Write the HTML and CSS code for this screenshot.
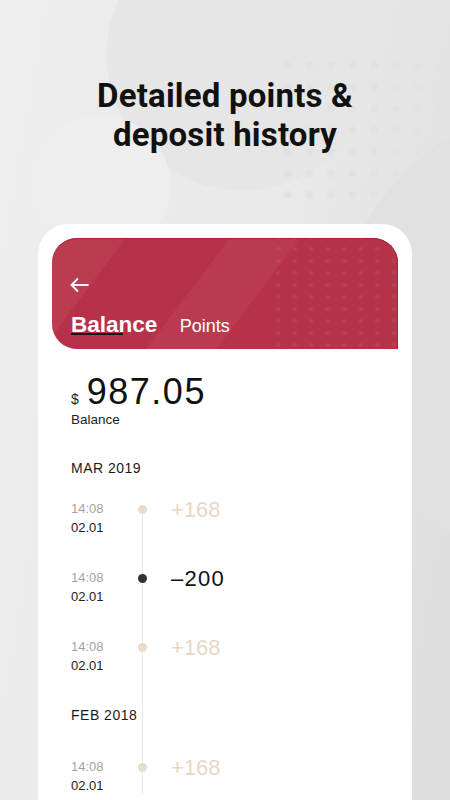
FILE: index.html
```html
<!DOCTYPE html>
<html lang="en">
<head>
<meta charset="utf-8">
<title>Balance history</title>
<link rel="stylesheet" href="styles.css">
</head>
<body>
  <h1 class="headline">Detailed points &amp;<br>deposit history</h1>

  <section class="card">
    <header class="appbar">
      <svg class="back" width="20" height="16" viewBox="0 0 20 16" aria-hidden="true">
        <path d="M19.5 8H2.5M9 1.5L2.5 8L9 14.5" fill="none" stroke="#fff" stroke-width="1.8"/>
      </svg>
      <nav class="tabs">
        <span class="tab tab-active">Balance</span>
        <span class="tab">Points</span>
      </nav>
    </header>

    <div class="summary">
      <div class="amount"><span class="currency">$</span><span class="value">987.05</span></div>
      <div class="amount-label">Balance</div>
    </div>

    <div class="history">
      <div class="group">
        <div class="month">MAR 2019</div>
        <ul class="rows">
          <li class="row">
            <div class="when"><span class="time">14:08</span><span class="date">02.01</span></div>
            <span class="dot"></span>
            <span class="points">+168</span>
          </li>
          <li class="row row-debit">
            <div class="when"><span class="time">14:08</span><span class="date">02.01</span></div>
            <span class="dot"></span>
            <span class="points">&ndash;200</span>
          </li>
          <li class="row">
            <div class="when"><span class="time">14:08</span><span class="date">02.01</span></div>
            <span class="dot"></span>
            <span class="points">+168</span>
          </li>
        </ul>
      </div>
      <div class="group group-later">
        <div class="month">FEB 2018</div>
        <ul class="rows">
          <li class="row">
            <div class="when"><span class="time">14:08</span><span class="date">02.01</span></div>
            <span class="dot"></span>
            <span class="points">+168</span>
          </li>
        </ul>
      </div>
    </div>
  </section>
</body>
</html>
```

FILE: styles.css
```css
html, body {
  margin: 0;
  padding: 0;
}

body {
  width: 450px;
  height: 800px;
  overflow: hidden;
  position: relative;
  font-family: "Liberation Sans", Arial, sans-serif;
  color: #1a1a1a;
  background:
    radial-gradient(circle at 101px 185px, #eeeeee 69px, rgba(238,238,238,0) 69.6px),
    radial-gradient(circle at 242px 55px, #e6e6e6 135px, rgba(230,230,230,0) 135.6px),
    radial-gradient(circle at 565px 335px, #e1e1e1 228px, rgba(225,225,225,0) 228.6px),
    linear-gradient(100deg, #eeeeee 0%, #e9e9e9 55%, #dddddd 100%);
}

/* decorative dot grid, top right */
body::before {
  content: "";
  position: absolute;
  left: 277px;
  top: 55px;
  width: 173px;
  height: 151px;
  background: radial-gradient(circle, #e2e2e2 3.6px, rgba(226,226,226,0) 4.3px) 0 0 / 21.6px 21.5px;
}

.headline {
  position: relative;
  z-index: 1;
  margin: 76px 0 0;
  font-family: Roboto, "Liberation Sans", sans-serif;
  font-weight: 700;
  font-size: 33px;
  line-height: 39px;
  text-align: center;
  color: #111;
  letter-spacing: 0.2px;
}

.card {
  margin: 70px 38px 0;
  height: 600px;
  padding: 14px 14px 0;
  background: #fff;
  border-radius: 30px 30px 0 0;
}

.appbar {
  position: relative;
  height: 111px;
  box-sizing: border-box;
  padding-top: 39px;
  border-radius: 25px 25px 0 25px;
  overflow: hidden;
  background: linear-gradient(127deg,
      #bb3b4f 0 59px,
      #b6324a 59px 142px,
      #ba3a4f 142px 198px,
      #b7334a 198px);
  box-shadow: inset 0 1px 0 #a8263b, inset -1px 0 0 #a8263b;
}

.appbar::before {
  content: "";
  position: absolute;
  left: 218px;
  top: 0;
  right: 0;
  bottom: 0;
  background: radial-gradient(circle, rgba(255,255,255,0.055) 2px, rgba(255,255,255,0) 2.6px) 0 5px / 16.5px 12px;
}

.back {
  position: relative;
  display: block;
  margin-left: 17px;
}

.tabs {
  position: relative;
  display: flex;
  align-items: baseline;
  gap: 22.5px;
  margin-top: 19px;
  padding-left: 19px;
  color: #fff;
}

.tab {
  position: relative;
  font-size: 18px;
  line-height: 26px;
}

.tab-active {
  font-size: 22.5px;
  font-weight: 700;
}

.tab-active::after {
  content: "";
  position: absolute;
  left: 0;
  top: 21px;
  width: 52px;
  height: 2px;
  background: #151515;
}

.summary {
  padding: 23px 0 0 19px;
}

.amount {
  display: flex;
  align-items: baseline;
  height: 40px;
}

.currency {
  font-size: 14px;
  line-height: 14px;
  margin-right: 8px;
  color: #222;
}

.value {
  font-size: 36px;
  line-height: 40px;
  letter-spacing: 1.5px;
  color: #111;
}

.amount-label {
  font-size: 13.5px;
  line-height: 16px;
  color: #222;
}

.history {
  margin-top: 31px;
  padding-left: 19px;
  background: linear-gradient(#e8e8e8, #e8e8e8) no-repeat 90px 50px / 1px 100%;
}

.month {
  font-size: 14px;
  line-height: 18px;
  letter-spacing: 0.5px;
  color: #1a1a1a;
  margin-bottom: 22px;
}

.group-later {
  margin-top: 31px;
}

.group-later .month {
  margin-bottom: 33px;
}

.rows {
  list-style: none;
  margin: 0;
  padding: 0;
  display: flex;
  flex-direction: column;
  gap: 31px;
}

.row {
  display: flex;
  align-items: flex-start;
}

.when {
  width: 67px;
  display: flex;
  flex-direction: column;
  font-size: 13px;
  line-height: 19px;
}

.time {
  color: #a3a3a3;
}

.date {
  color: #222;
}

.dot {
  width: 9px;
  height: 9px;
  margin-top: 6px;
  border-radius: 50%;
  background: #e9dccb;
}

.points {
  margin-left: 24px;
  font-size: 22px;
  line-height: 22px;
  color: #e6d8c5;
}

.row-debit .dot {
  background: #333;
}

.row-debit .points {
  color: #111;
  letter-spacing: 1.3px;
}
```
